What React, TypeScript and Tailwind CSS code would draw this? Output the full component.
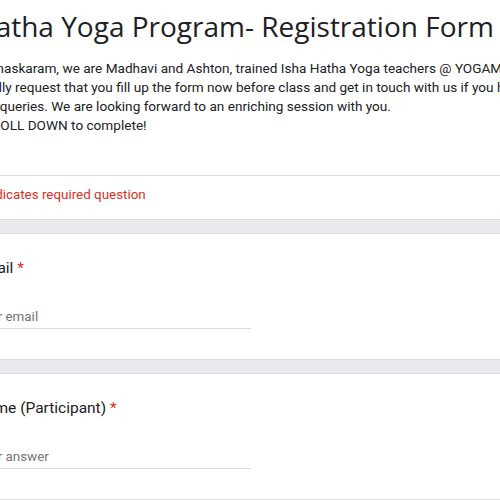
import React from 'react'

const DESCRIPTION = [
  'Namaskaram, we are Madhavi and Ashton, trained Isha Hatha Yoga teachers @ YOGAM. Please',
  'Kindly request that you fill up the form now before class and get in touch with us if you have',
  'any queries. We are looking forward to an enriching session with you.',
  'SCROLL DOWN to complete!',
]

function Question({ label, placeholder }: { label: string; placeholder: string }) {
  return (
    <div className="bg-white border border-[#dadce0] rounded-lg h-[127px] pl-[24px] pt-[22px]">
      <div className="text-[15.5px] leading-[24px] text-[#202124] whitespace-nowrap" style={{ fontFamily: 'Roboto, sans-serif' }}>
        {label} <span className="text-[#d93025]">*</span>
      </div>
      <div className="mt-[27px] w-[276px] border-b border-[#dadce0] pb-[1px] text-[13.4px] leading-[20px] text-[#70757a] whitespace-nowrap" style={{ fontFamily: 'Roboto, sans-serif' }}>
        {placeholder}
      </div>
    </div>
  )
}

export default function App() {
  return (
    <div className="w-[500px] h-[500px] overflow-hidden bg-[#e8eaed]">
      <div className="ml-[-50px] w-[640px] flex flex-col gap-[13px]">
        {/* Header card */}
        <div className="bg-white border-x border-b border-[#dadce0] rounded-b-lg">
          <div className="pl-[24px] pt-[8px] pb-[40px] border-b border-[#dadce0]">
            <h1 className="text-[28px] leading-[36px] text-[#202124] whitespace-nowrap" style={{ fontFamily: "'Open Sans', sans-serif" }}>
              Hatha Yoga Program- Registration Form
            </h1>
            <div className="mt-[15px] text-[13.6px] leading-[19px] text-[#202124]" style={{ fontFamily: 'Roboto, sans-serif' }}>
              {DESCRIPTION.map((line) => (
                <p key={line} className="whitespace-nowrap">{line}</p>
              ))}
            </div>
          </div>
          <div className="pl-[24px] pt-[9px] pb-[14px] text-[13.4px] leading-[20px] text-[#d93025] whitespace-nowrap" style={{ fontFamily: 'Roboto, sans-serif' }}>
            * Indicates required question
          </div>
        </div>

        <Question label="Email" placeholder="Your email" />
        <Question label="Name (Participant)" placeholder="Your answer" />
      </div>
    </div>
  )
}
